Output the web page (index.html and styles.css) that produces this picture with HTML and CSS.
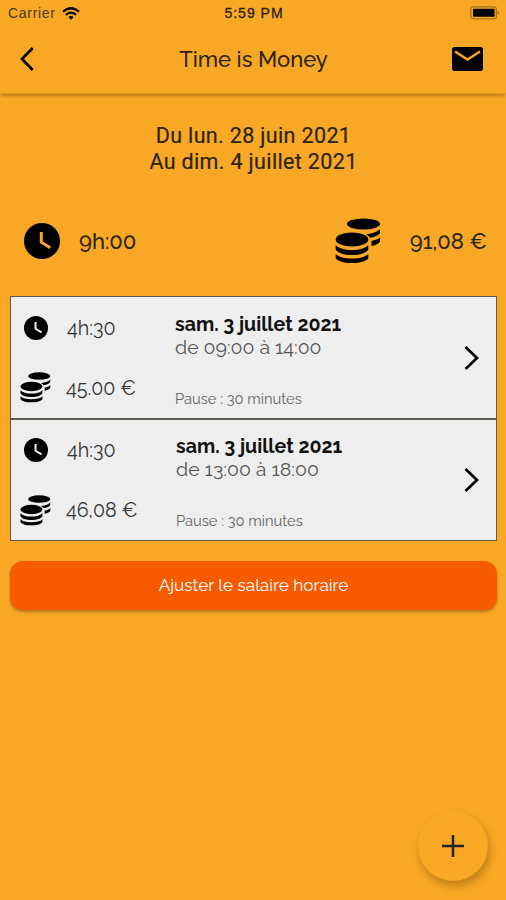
FILE: index.html
```
<!DOCTYPE html>
<html lang="fr">
<head>
<title>Time is Money</title>
<meta charset="utf-8">
<link rel="stylesheet" href="styles.css">
</head>
<body>
<svg class="defs" width="0" height="0">
<symbol id="clock" viewBox="0 0 36 36">
<circle cx="18" cy="18" r="18"/>
<path class="hand" d="M17.300 9v10.200l9 5.500"/>
</symbol>
<symbol id="coins" viewBox="0 0 46 46">
<ellipse cx="28.500" cy="6" rx="16.500" ry="5.500"/>
<path d="M45 11v4c-1 2-5 4-10 4.800-1-1.500-2.500-2.700-4-3.500 7-.8 12-2.800 14-5.300zM45 19.500v4c-1 2-4 3.500-8.500 4.500v-5c4-.8 7-2 8.500-3.500z"/>
<ellipse cx="17" cy="21.500" rx="16.300" ry="7"/>
<path d="M.7 27c3 3.500 9 5 16.300 5s13.300-1.500 16.300-5v4.500c-2 3.500-8 5.500-16.300 5.500S2.700 35 .7 31.500zM.7 36c3 3.200 9 4.500 16.300 4.500S30.300 39.200 33.300 36v4c-2 3.500-8 5-16.300 5S2.700 43.500.7 40z"/>
</symbol>
</svg>
<div class="status">
<div class="network">
<span class="carrier">Carrier</span>
<svg class="wifi" viewBox="0 0 18 13"><path d="M1 4.800Q9-2.300 17 4.800M3.900 7.800q5.100-4.200 10.200 0"/><path class="dot" d="M9 8.700q1.900 0 2.500 1.500L9 12.800l-2.500-2.600Q7.100 8.700 9 8.700z"/></svg>
</div>
<span class="time">5:59 PM</span>
<svg class="battery" viewBox="0 0 30 14"><rect class="case" x=".8" y=".8" width="25.500" height="12" rx="2.500"/><rect x="3" y="2.800" width="21.500" height="8" rx=".8"/><path class="tip" d="M27.500 4.500q3 2.300 0 4.600z"/></svg>
</div>
<div class="appbar">
<svg class="back" viewBox="0 0 14 24"><path d="M12.700 1L2 12l10.700 11"/></svg>
<h1>Time is Money</h1>
<svg class="mail" viewBox="0 0 31 24"><rect width="31" height="24" rx="2.500"/><path d="M3 4.500l12.500 8 12.500-8"/></svg>
</div>
<div class="content">
<p class="week">Du lun. 28 juin 2021<br>Au dim. 4 juillet 2021</p>
<div class="totals">
<svg class="bigclock"><use href="#clock"/></svg>
<span>9h:00</span>
<svg class="bigcoins"><use href="#coins"/></svg>
<span>91,08 €</span>
</div>
<div class="shifts">
<div class="shift">
<div class="gain">
<div class="line"><svg class="clock"><use href="#clock"/></svg><span>4h:30</span></div>
<div class="line"><svg class="coins"><use href="#coins"/></svg><span>45.00 €</span></div>
</div>
<div class="detail">
<b class="date">sam. 3 juillet 2021</b>
<span class="range">de 09:00 à 14:00</span>
<span class="pause">Pause : 30 minutes</span>
</div>
<svg class="next" viewBox="0 0 15 24"><path d="M1.500 1L13 12 1.500 23"/></svg>
</div>
<div class="shift second">
<div class="gain">
<div class="line"><svg class="clock"><use href="#clock"/></svg><span>4h:30</span></div>
<div class="line"><svg class="coins"><use href="#coins"/></svg><span>46,08 €</span></div>
</div>
<div class="detail">
<b class="date">sam. 3 juillet 2021</b>
<span class="range">de 13:00 à 18:00</span>
<span class="pause">Pause : 30 minutes</span>
</div>
<svg class="next" viewBox="0 0 15 24"><path d="M1.500 1L13 12 1.500 23"/></svg>
</div>
</div>
<button class="adjust">Ajuster le salaire horaire</button>
</div>
<button class="add"><svg viewBox="0 0 22 22"><path d="M11 0v22M0 11h22"/></svg></button>
</body>
</html>
```
FILE: styles.css
```
* {
box-sizing: border-box;
}
body {
--hand: #f9a825;
margin: 0;
height: 900px;
overflow: hidden;
background-color: #f9a825;
color: #2b2410;
font-family: Raleway, Lato, sans-serif;
}
svg {
display: block;
flex: none;
}
.defs {
position: absolute;
}
.hand {
fill: none;
stroke: var(--hand);
stroke-width: 3;
}
.status {
display: grid;
grid-template-columns: 1fr auto 1fr;
align-items: center;
height: 26px;
padding: 0 6px 0 8px;
font-family: "Liberation Sans", sans-serif;
font-size: 14px;
}
.network {
display: flex;
align-items: center;
gap: 6px;
}
.carrier {
width: 48px;
letter-spacing: .7px;
color: #4c3916;
}
.wifi {
width: 18px;
height: 13px;
fill: none;
stroke: #000;
stroke-width: 2.200;
}
.wifi .dot {
fill: #000;
stroke: none;
}
.time {
letter-spacing: 1px;
-webkit-text-stroke: .3px;
}
.battery {
justify-self: end;
width: 30px;
height: 14px;
}
.battery .case {
fill: none;
stroke: #a8741d;
stroke-width: 1.300;
}
.battery .tip {
fill: #a8741d;
}
.appbar {
display: flex;
align-items: center;
height: 68px;
padding: 0 23px 1px 20px;
border-bottom: 1px solid #e59a20;
box-shadow: 0 3px 3px -1px rgba(90, 50, 0, .35);
}
.appbar h1 {
flex: 1;
margin: 0;
padding-left: 21px;
text-align: center;
font-size: 22px;
font-weight: 500;
}
.back {
width: 14px;
height: 24px;
fill: none;
stroke: #000;
stroke-width: 2.700;
}
.mail {
width: 31px;
height: 24px;
}
.mail path {
fill: none;
stroke: #f9a825;
stroke-width: 2.600;
}
.content {
padding: 29px 9px 0 10px;
}
.week {
margin: 0;
text-align: center;
font-family: Roboto, sans-serif;
font-size: 21.500px;
line-height: 26px;
letter-spacing: .35px;
-webkit-text-stroke: .2px;
}
.totals {
display: flex;
align-items: center;
height: 46px;
margin-top: 43px;
padding: 0 10px 0 14px;
font-size: 22px;
font-weight: 500;
}
.bigclock {
width: 36px;
height: 36px;
margin-right: 19px;
}
.bigcoins {
width: 46px;
height: 46px;
margin-left: auto;
margin-right: 29px;
}
.shifts {
margin-top: 32px;
}
.shift {
--hand: #eee;
display: flex;
align-items: center;
height: 123px;
padding: 0 17px 0 9px;
border: 1px solid #5e5a52;
background-color: #eee;
color: #333;
}
.shift.second {
height: 122px;
}
.gain {
display: flex;
flex-direction: column;
gap: 29px;
width: 155px;
}
.line {
display: flex;
align-items: center;
height: 31px;
font-size: 19.700px;
}
.line svg {
fill: #000;
}
.clock {
width: 24px;
height: 24px;
margin: 0 19px 0 4px;
}
.coins {
width: 31px;
height: 31px;
margin-right: 15px;
}
.detail {
display: flex;
flex-direction: column;
flex: 1;
height: 100%;
padding-top: 16px;
white-space: nowrap;
}
.second .detail {
padding-top: 15px;
padding-left: 1px;
}
.date {
height: 23px;
line-height: 24px;
font-size: 19.600px;
color: #111;
}
.range {
height: 24px;
line-height: 24px;
font-size: 19.500px;
color: #555;
}
.pause {
margin-top: 28px;
line-height: 22px;
font-size: 14.700px;
color: #666;
}
.next {
width: 15px;
height: 24px;
fill: none;
stroke: #000;
stroke-width: 2.700;
}
.adjust {
display: block;
width: 100%;
height: 49px;
margin-top: 20px;
padding: 0 0 2px;
border: none;
border-radius: 13px;
background-color: #f65b00;
box-shadow: 0 2px 3px rgba(100, 60, 0, .45);
color: #fff;
font-family: inherit;
font-size: 17.200px;
}
.add {
position: absolute;
right: 18px;
bottom: 19px;
display: flex;
align-items: center;
justify-content: center;
width: 70px;
height: 70px;
padding: 0;
border: none;
border-radius: 50%;
background-color: #f9a825;
box-shadow: 2px 5px 9px rgba(110, 60, 0, .4);
}
.add svg {
width: 22px;
height: 22px;
stroke: #222;
stroke-width: 2.500;
}
```
